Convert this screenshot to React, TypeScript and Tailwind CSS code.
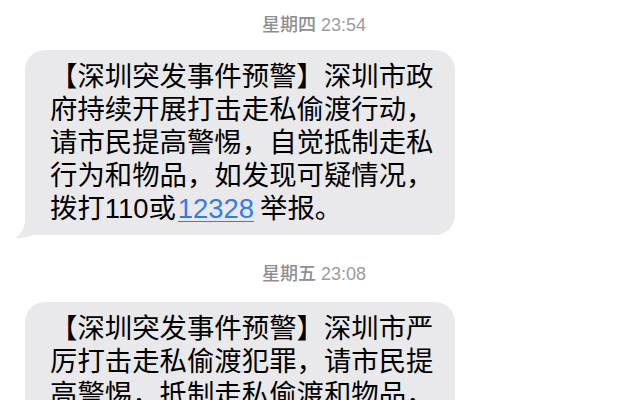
import React from "react"

const messages = [
  {
    day: "星期四",
    time: "23:54",
    lines: [
      "【深圳突发事件预警】深圳市政",
      "府持续开展打击走私偷渡行动，",
      "请市民提高警惕，自觉抵制走私",
      "行为和物品，如发现可疑情况，",
      null,
    ],
  },
  {
    day: "星期五",
    time: "23:08",
    lines: [
      "【深圳突发事件预警】深圳市严",
      "厉打击走私偷渡犯罪，请市民提",
      "高警惕，抵制走私偷渡和物品，",
      "如发现可疑情况，拨打110或",
      "12328举报。",
    ],
  },
]

function Tail() {
  return (
    <svg
      className="absolute left-[-10px] bottom-[-3px]"
      width="30"
      height="25"
      viewBox="0 0 30 25"
    >
      <path
        d="M10 0 H30 V22 H18 C13 24.5 5 25.5 0 25 C5 22 9.5 16 10 8 Z"
        fill="#e9e9eb"
      />
    </svg>
  )
}

function Stamp({ day, time, top }: { day: string; time: string; top: string }) {
  return (
    <div className={`${top} text-center text-[18px] leading-[22px] text-[#8e8e93]`}>
      <span className="font-medium">{day}</span> <span className="text-[#9b9ba0]">{time}</span>
    </div>
  )
}

export default function App() {
  return (
    <div className="w-[628px] h-[400px] overflow-hidden bg-white font-['Liberation_Sans','Noto_Sans_CJK_SC',sans-serif]">
      <Stamp day={messages[0].day} time={messages[0].time} top="pt-[14px]" />

      {/* first message */}
      <div className="relative ml-[25px] mt-[14px] w-[430px] rounded-[20px] bg-[#e9e9eb] pl-[25px] pt-[10px] pb-[10px] text-[27.4px] leading-[33px] text-black">
        {messages[0].lines.map((l, i) =>
          l ? (
            <div key={i} className="whitespace-nowrap">
              {l}
            </div>
          ) : (
            <div key={i} className="whitespace-nowrap">
              拨打110或
              <span className="ml-[2px] mr-[6px] text-[#2f7cf0] underline decoration-1 underline-offset-[3px]">12328</span>
              举报。
            </div>
          )
        )}
        <Tail />
      </div>

      <Stamp day={messages[1].day} time={messages[1].time} top="mt-[28px]" />

      {/* second message */}
      <div className="relative ml-[25px] mt-[17px] w-[430px] rounded-[20px] bg-[#e9e9eb] pl-[25px] pt-[10px] pb-[10px] text-[27.4px] leading-[33px] text-black">
        {messages[1].lines.map((l, i) => (
          <div key={i} className="whitespace-nowrap">
            {l}
          </div>
        ))}
        <Tail />
      </div>
    </div>
  )
}
